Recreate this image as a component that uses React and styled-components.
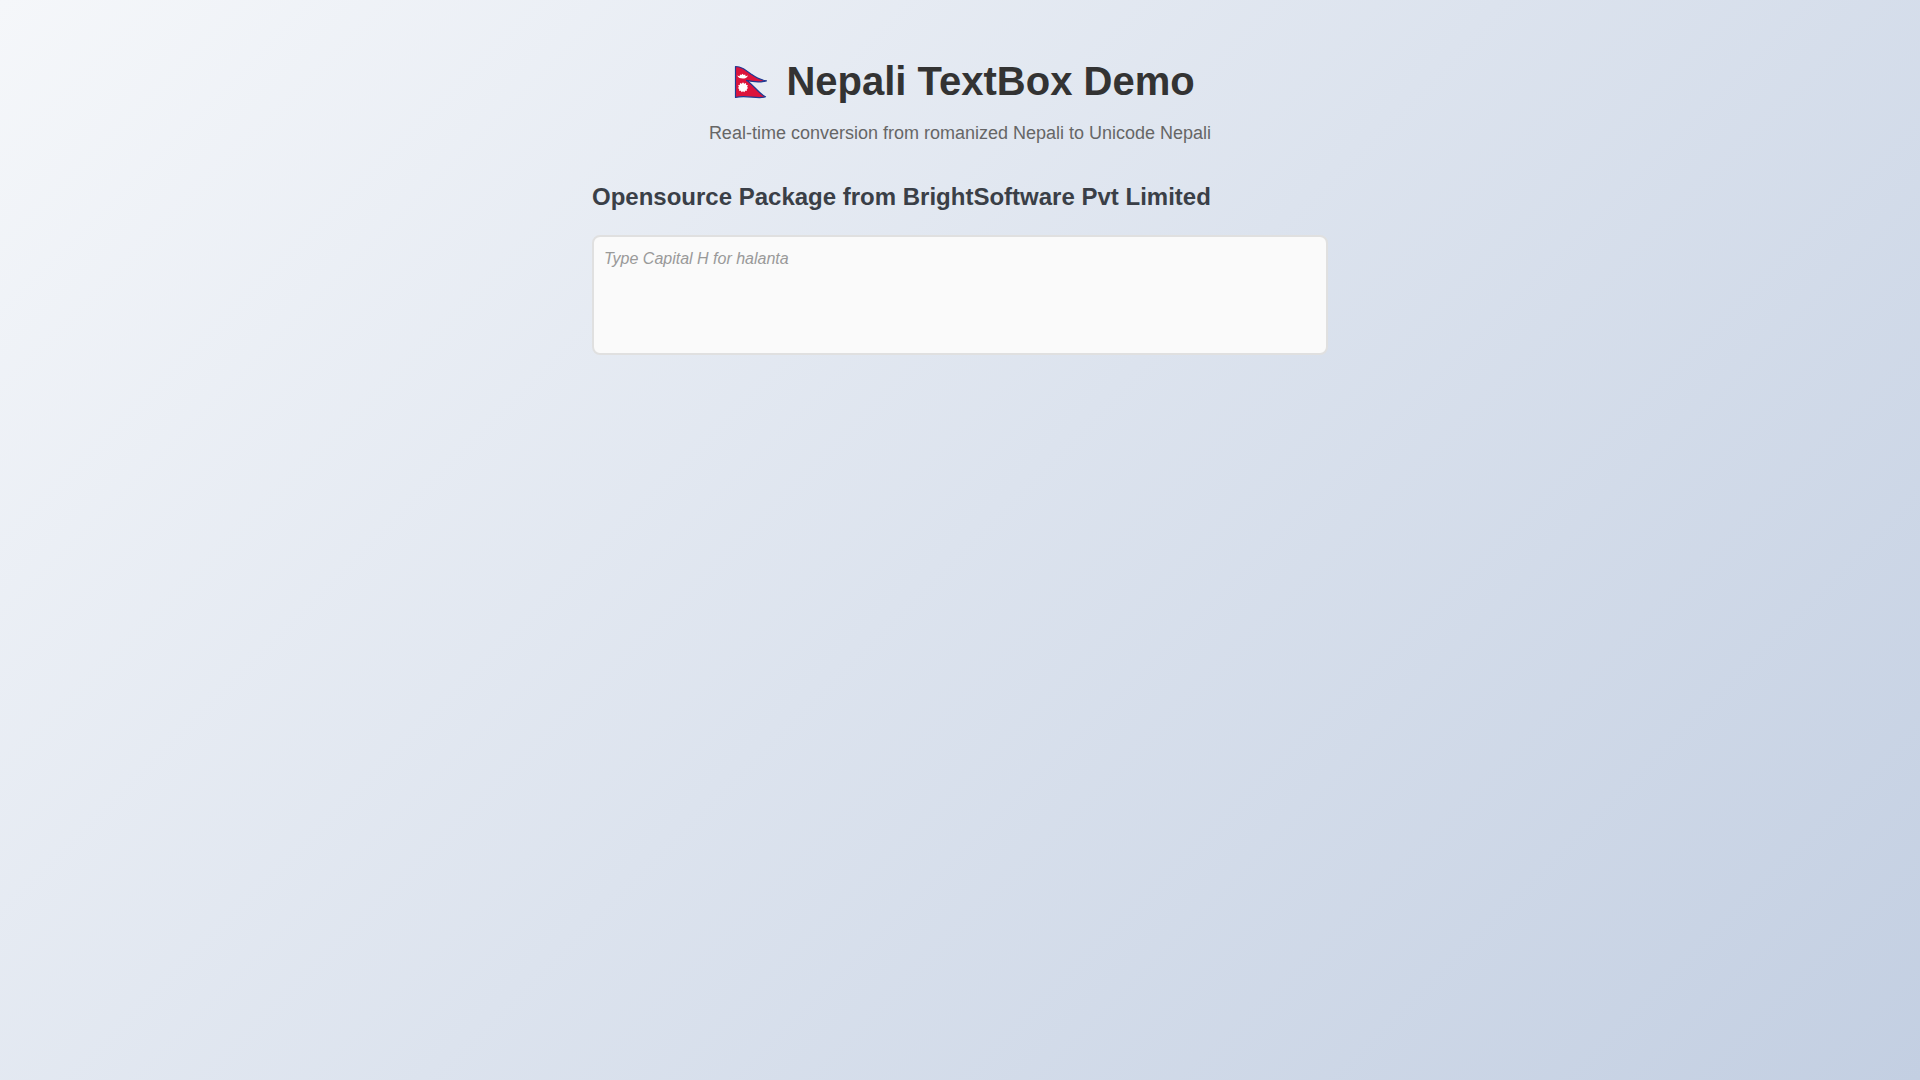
import React, { useState } from "react";
import styled, { createGlobalStyle } from "styled-components";

const App = () => {
  const [text, setText] = useState("");

  return (
    <>
      <GlobalStyle />
      <Container>
        <Header>
          <Title>
            <NepalFlag /> Nepali TextBox Demo
          </Title>
          <Subtitle>
            Real-time conversion from romanized Nepali to Unicode Nepali
          </Subtitle>
        </Header>
        <Label htmlFor="nepali-text">
          Opensource Package from BrightSoftware Pvt Limited
        </Label>
        <TextBox
          id="nepali-text"
          placeholder="Type Capital H for halanta"
          value={text}
          onChange={(e) => setText(e.target.value)}
        />
      </Container>
    </>
  );
};

const NepalFlag = () => (
  <Flag viewBox="0 0 50 40" role="img" aria-label="Nepal">
    <path
      d="M10.5 3.5C16 3.4 20 6.5 26 11C31 14.5 35 17 41.5 17.8C35 19.6 29.5 19.3 21.5 17.4C28 21 33 30 40.5 33.8C33 36.5 20.5 31.5 10.5 34.5Z"
      fill="#dc143c"
      stroke="#1f3a93"
      strokeWidth="1.2"
      strokeLinejoin="round"
    />
    <path
      d="M12.2 12.6L14.6 13.2L15 11.6L16.4 12L17.5 10.8L18.7 12L20.2 11.6L20.6 13.2L23 12.6C22 15.2 20 15.6 17.8 15.6C15.3 15.6 13.4 15 12.2 12.6Z"
      fill="#fff"
    />
    <path
      d="M18 19.2L19.2 20.8L21 20L21.2 21.9L23 22.3L22 23.9L23.2 25L21.8 26.1L22 27.8L20.2 27.8L19.3 29.2L18 28.2L16.7 29.2L15.8 27.8L14 27.8L14.2 26.1L12.8 25L14 23.9L13 22.3L14.8 21.9L15 20L16.8 20.8Z"
      fill="#fff"
    />
  </Flag>
);

export default App;

const GlobalStyle = createGlobalStyle`
  * {
    box-sizing: border-box;
  }

  body {
    margin: 0;
    min-height: 100vh;
    font-family: "Liberation Sans", Arial, sans-serif;
    background: linear-gradient(135deg, #f5f7fa 0%, #c3cfe2 100%);
  }
`;

const Container = styled.main`
  max-width: 800px;
  margin: 0 auto;
  padding: 57px 32px;
`;

const Header = styled.header`
  margin-bottom: 40px;
  text-align: center;
`;

const Title = styled.h1`
  margin: 0 0 18px;
  color: #333;
  font-size: 40px;
  line-height: 48px;
  text-rendering: optimizeLegibility;
`;

const Flag = styled.svg`
  width: 50px;
  height: 40px;
  vertical-align: -8px;
`;

const Subtitle = styled.p`
  margin: 0;
  color: #666;
  font-size: 18px;
  line-height: 20px;
`;

const Label = styled.label`
  display: block;
  margin-bottom: 24px;
  color: #3a3f47;
  font-size: 24px;
  font-weight: bold;
  line-height: 28px;
`;

const TextBox = styled.textarea`
  display: block;
  width: 100%;
  height: 120px;
  padding: 12px 10px;
  border: 2px solid #e0e0e0;
  border-radius: 8px;
  background: #fafafa;
  color: #333;
  font-family: inherit;
  font-size: 16px;
  line-height: 20px;
  resize: none;

  &::placeholder {
    color: #999;
    font-style: italic;
  }
`;
